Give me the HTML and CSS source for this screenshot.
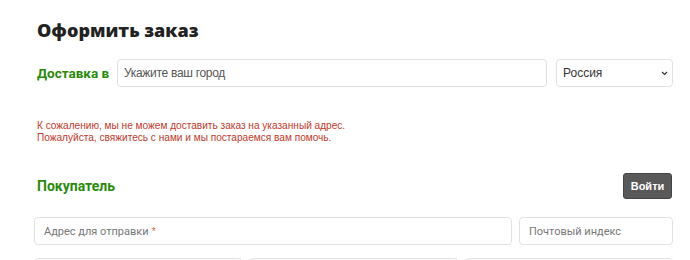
FILE: index.html
```html
<!DOCTYPE html>
<html lang="ru">
<head>
    <meta charset="UTF-8">
    <title>Оформить заказ</title>
    <link rel="stylesheet" href="styles.css">
</head>
<body>
    <div class="checkout">
        <h1 class="page-title">Оформить заказ</h1>

        <!-- доставка -->
        <div class="delivery-row">
            <label class="section-label">Доставка в</label>
            <input type="text" class="field city" placeholder="Укажите ваш город">
            <div class="select-wrap">
                <select class="field country">
                    <option>Россия</option>
                </select>
                <svg class="chevron" width="7" height="5" viewBox="0 0 7 5">
                    <path d="M1 1 L3.5 3.5 L6 1" fill="none" stroke="#333" stroke-width="1.2"/>
                </svg>
            </div>
        </div>

        <p class="delivery-error">
            К сожалению, мы не можем доставить заказ на указанный адрес.<br>
            Пожалуйста, свяжитесь с нами и мы постараемся вам помочь.
        </p>

        <!-- покупатель -->
        <div class="buyer-head">
            <span class="section-label">Покупатель</span>
            <button class="login-btn">Войти</button>
        </div>

        <div class="form-row">
            <div class="field field-wide"><span class="ph">Адрес для отправки</span><span class="req">*</span></div>
            <div class="field field-zip"><span class="ph">Почтовый индекс</span></div>
        </div>
        <div class="form-row second">
            <div class="field"></div>
            <div class="field"></div>
            <div class="field"></div>
        </div>
    </div>
</body>
</html>
```

FILE: styles.css
```css
* {
    margin: 0;
    padding: 0;
    box-sizing: border-box;
}

body {
    font-family: "Liberation Sans", Arial, sans-serif;
    background: #fff;
    color: #333;
}

.checkout {
    width: 639px;
    margin-left: 34px;
    padding-top: 16px;
}

/* заголовок */
.page-title {
    font-family: "Open Sans", sans-serif;
    font-weight: 800;
    font-size: 18px;
    line-height: 28px;
    color: #222;
    padding-left: 3px;
}

.section-label {
    font-family: Roboto, sans-serif;
    font-weight: 700;
    font-size: 14px;
    color: #2a8a0c;
    white-space: nowrap;
}

/* строка доставки */
.delivery-row {
    display: flex;
    align-items: center;
    margin-top: 15px;
    padding-left: 3px;
}

.delivery-row .section-label {
    width: 80px;
    font-size: 13.5px;
}

.field {
    height: 28px;
    border: 1px solid #e2e2e2;
    border-radius: 4px;
    background: #fff;
    font-family: "Liberation Sans", Arial, sans-serif;
    font-size: 12px;
    color: #333;
}

.city {
    width: 430px;
    padding: 0 6px;
    letter-spacing: -0.3px;
}

.city::placeholder {
    color: #555;
}

.select-wrap {
    position: relative;
    margin-left: 9px;
}

.country {
    width: 117px;
    padding: 0 6px;
    appearance: none;
    -webkit-appearance: none;
    display: block;
}

.chevron {
    position: absolute;
    right: 5px;
    top: 12px;
    pointer-events: none;
}

.delivery-error {
    margin-top: 33px;
    padding-left: 3px;
    font-size: 10.1px;
    line-height: 12px;
    color: #c0392b;
}

/* покупатель */
.buyer-head {
    display: flex;
    justify-content: space-between;
    align-items: center;
    margin-top: 29px;
    padding-left: 3px;
}

.login-btn {
    width: 49px;
    height: 26px;
    background: #595959;
    color: #fff;
    border: 1px solid #444;
    border-radius: 3px;
    font-family: "Liberation Sans", Arial, sans-serif;
    font-size: 11px;
    font-weight: bold;
    margin-right: 1px;
}

.form-row {
    display: flex;
    gap: 7px;
    margin-top: 18px;
}

.form-row.second {
    margin-top: 13px;
}

.form-row .field {
    flex: 1;
    display: flex;
    align-items: center;
    padding: 0 9px;
}

.form-row .field-wide {
    flex: 0 0 478px;
}

.form-row .field-zip {
    flex: 1;
}

.ph {
    font-family: Roboto, sans-serif;
    font-size: 11px;
    color: #777;
}

.req {
    color: #e0643c;
    font-size: 10px;
    margin-left: 3px;
    align-self: flex-start;
    margin-top: 8px;
}
```
